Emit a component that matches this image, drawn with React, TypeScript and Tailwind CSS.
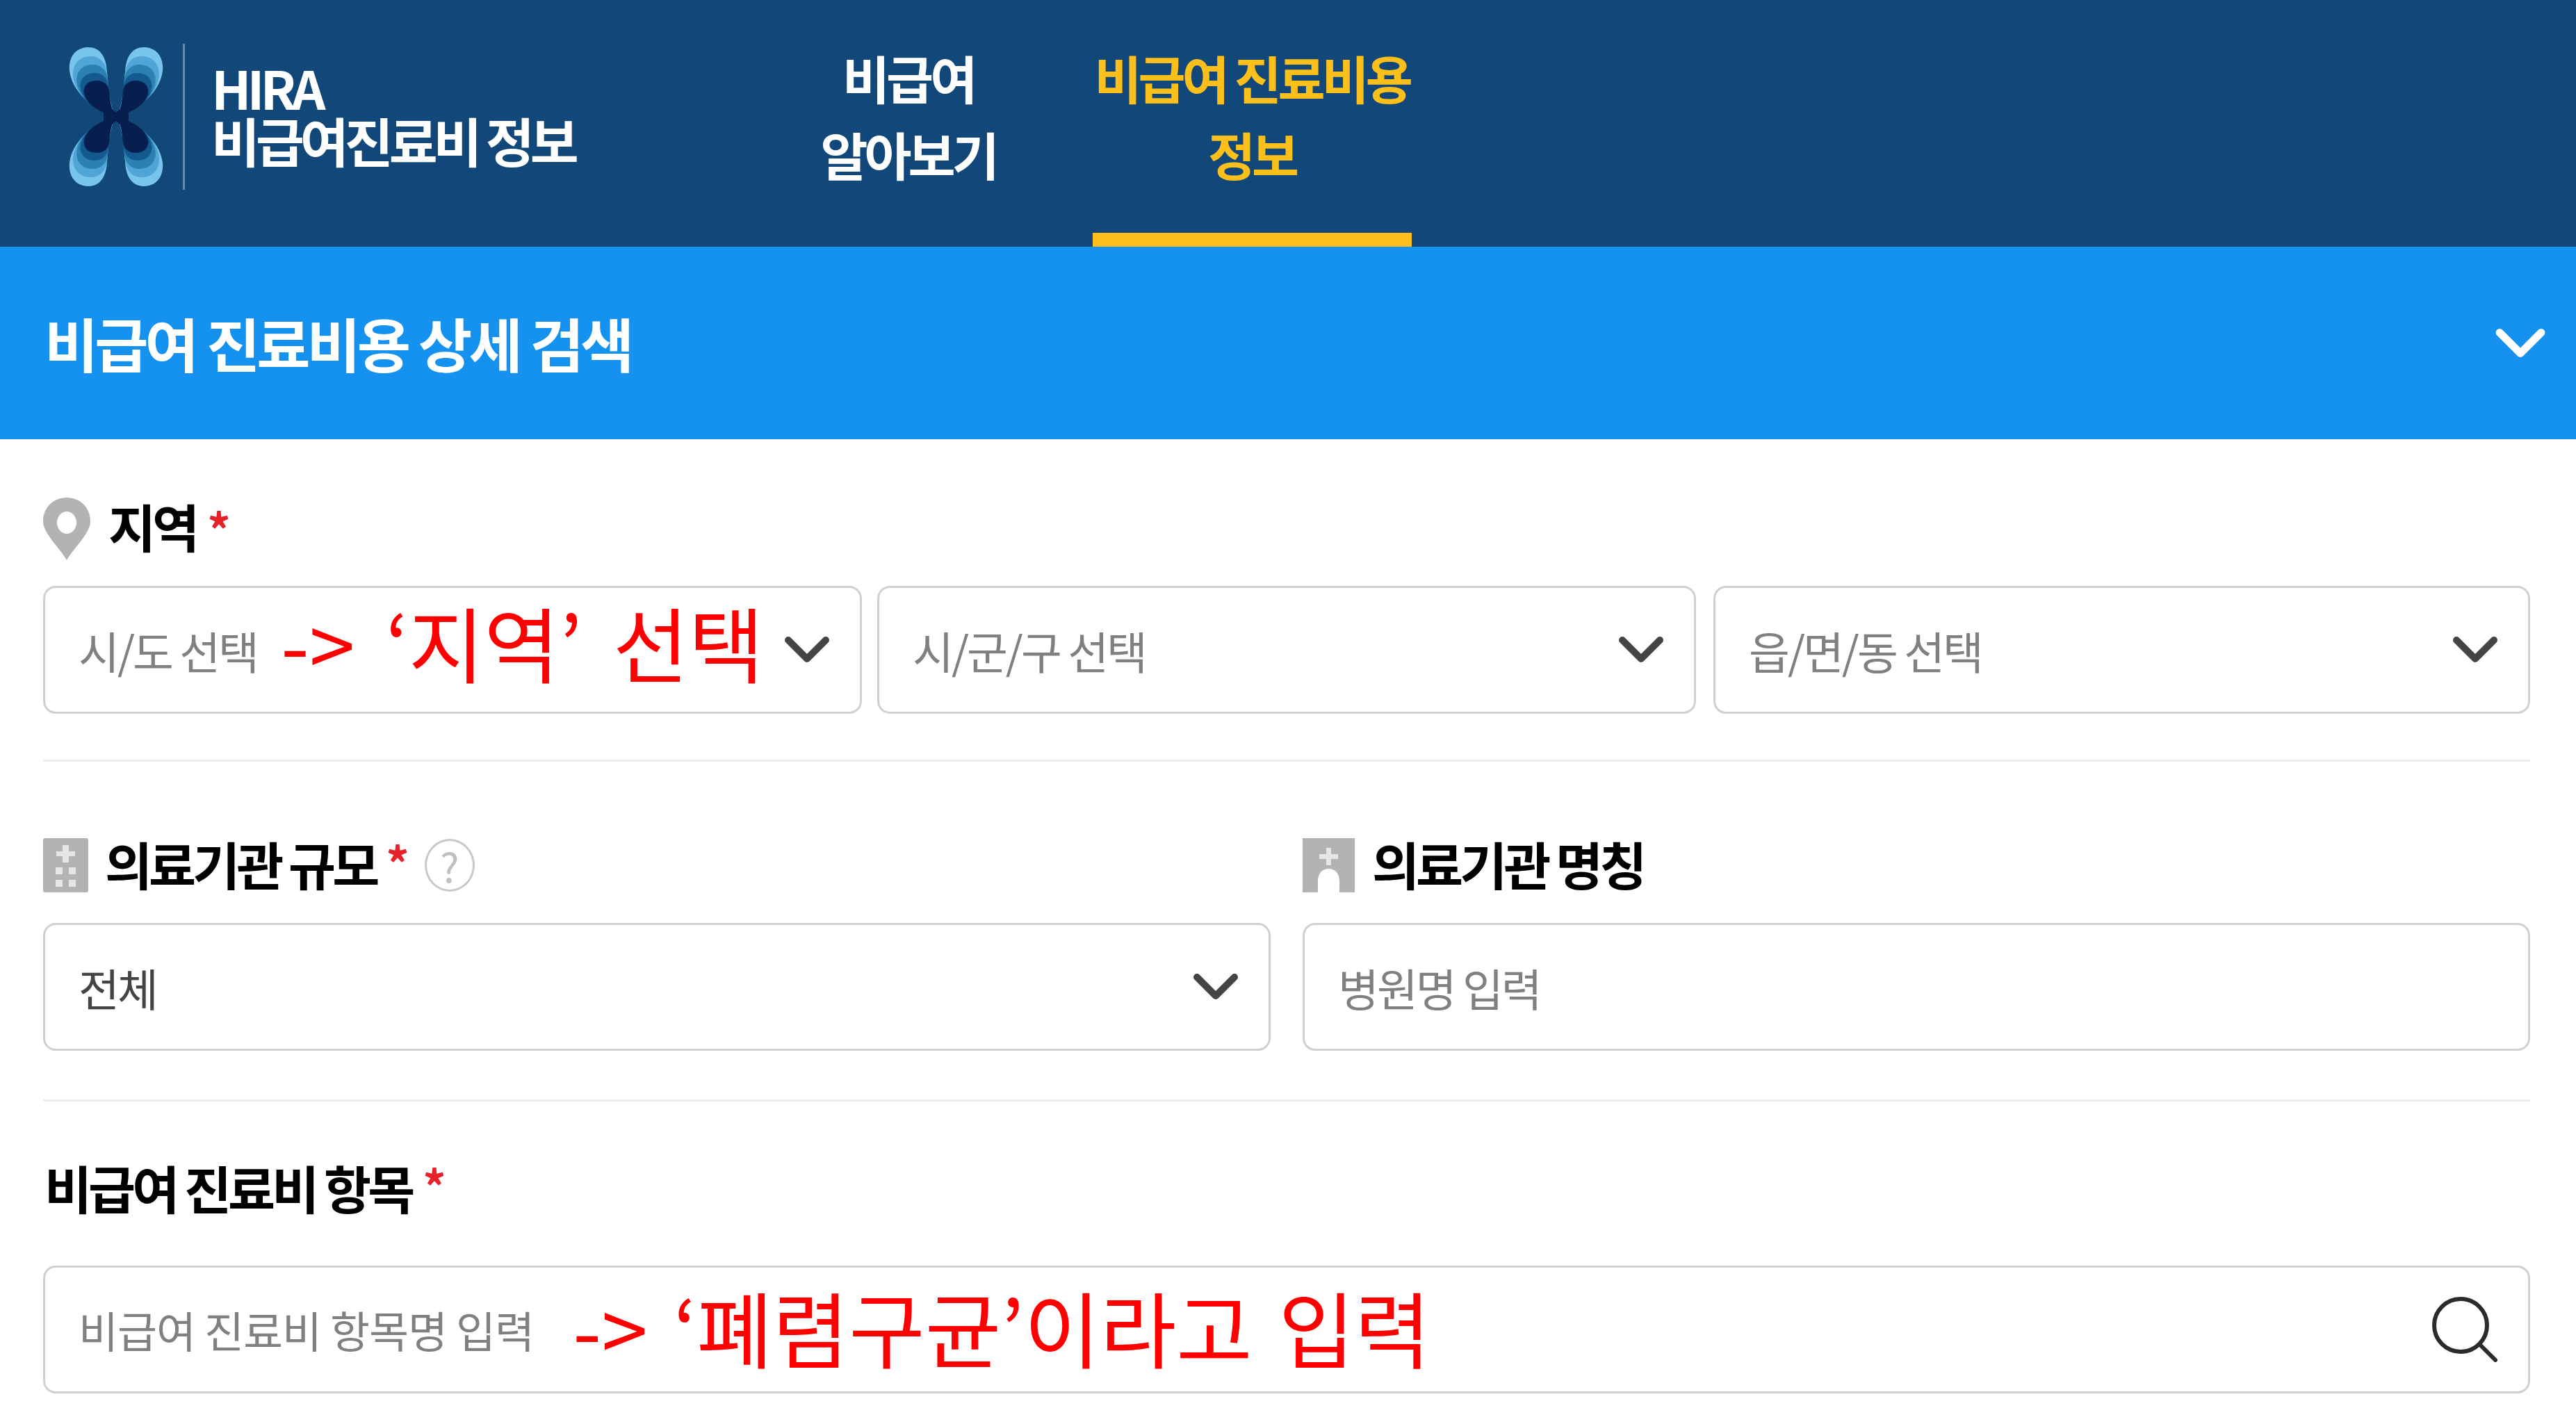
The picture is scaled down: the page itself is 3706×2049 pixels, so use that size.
import { ReactNode } from 'react';

function Chevron({ className = 'w-[64px] h-[38px] text-[#444]' }: { className?: string }) {
  return (
    <svg viewBox="0 0 64 38" fill="none" className={className}>
      <path d="M5 5 L32 32 L59 5" stroke="currentColor" strokeWidth="10" strokeLinecap="round" strokeLinejoin="round" />
    </svg>
  );
}

function Required() {
  return <span className="text-[#e6212a] text-[66px] leading-none font-bold self-start">*</span>;
}

function Logo() {
  const lobe = 'M66 100 C46 92 6 72 1 34 C-1 12 12 0 28 0 C44 0 54 12 55 36 C56 60 60 82 66 100Z';
  const layers = [
    { sx: 1, sy: 1, c: '#78c4ea' },
    { sx: 0.92, sy: 0.87, c: '#4fa6d6' },
    { sx: 0.84, sy: 0.75, c: '#2b80b4' },
    { sx: 0.76, sy: 0.63, c: '#135a8f' },
    { sx: 0.68, sy: 0.52, c: '#061f4e' },
  ];
  const quarter = layers.map(l => (
    <path key={l.c} d={lobe} fill={l.c} transform={`translate(66 100) scale(${l.sx} ${l.sy}) translate(-66 -100)`} />
  ));
  return (
    <svg viewBox="0 0 136 200" className="w-[136px] h-[200px]">
      <g>{quarter}</g>
      <g transform="matrix(-1 0 0 1 136 0)">{quarter}</g>
      <g transform="matrix(1 0 0 -1 0 200)">{quarter}</g>
      <g transform="matrix(-1 0 0 -1 136 200)">{quarter}</g>
      <path d="M50 78 L68 94 L86 78 L86 122 L68 106 L50 122Z" fill="#061f4e" />
    </svg>
  );
}

function Field({ children, className = '' }: { children: ReactNode; className?: string }) {
  return (
    <div className={`h-[184px] flex items-center justify-between pl-[48px] pr-[44px] bg-white border-[3px] border-[#d0d0d4] rounded-[18px] ${className}`}>
      {children}
    </div>
  );
}

function Placeholder({ children, dark }: { children: ReactNode; dark?: boolean }) {
  return <span className={`text-[64px] tracking-[-3px] leading-none ${dark ? 'text-[#444]' : 'text-[#808080]'}`}>{children}</span>;
}

function Note({ children, className = '' }: { children: ReactNode; className?: string }) {
  return <span className={`text-[#ff0000] leading-none whitespace-pre ${className}`}>{children}</span>;
}

export default function App() {
  return (
    <div className="w-[3706px] h-[2049px] bg-white overflow-hidden font-['Noto_Sans_CJK_KR',sans-serif]">
      <header className="h-[355px] bg-[#12477a] flex pl-[99px]">
        <div className="flex items-center h-[336px]">
          <Logo />
          <div className="w-[3px] h-[210px] bg-[#6d8caa] ml-[28px]" />
          <div className="ml-[38px] text-white font-bold leading-[76px] tracking-[-6px] text-[76px] -mt-[10px]">
            <div>HIRA</div>
            <div>비급여진료비 정보</div>
          </div>
        </div>
        <nav className="flex ml-[350px] gap-[135px] text-[74px] leading-[110px] font-bold tracking-[-5px] text-center whitespace-nowrap">
          <div className="w-[260px] pt-[56px] text-white">
            비급여
            <br />
            알아보기
          </div>
          <div className="w-[459px] pt-[56px] h-[355px] text-[#fdc01b] border-b-[20px] border-[#fdc01b]">
            비급여 진료비용
            <br />
            정보
          </div>
        </nav>
      </header>

      <div className="h-[277px] bg-[#1592f0] flex items-center justify-between pl-[64px] pr-[42px]">
        <h1 className="text-white text-[84px] font-bold tracking-[-5px] [word-spacing:2px] leading-none -mt-[2px]">비급여 진료비용 상세 검색</h1>
        <Chevron className="w-[76px] h-[42px] text-white" />
      </div>

      <main className="pl-[62px] pr-[66px]">
        <section className="pt-[84px] pb-[66px] border-b-[3px] border-[#eeeeee]">
          <div className="flex items-center gap-[26px] h-[90px]">
            <svg viewBox="0 0 68 90" className="w-[68px] h-[90px]">
              <path fillRule="evenodd" d="M34 0 C14 0 0 15 0 34 C0 52 24 72 34 90 C44 72 68 52 68 34 C68 15 54 0 34 0Z M34 20 A14 16 0 1 0 34 52 A14 16 0 1 0 34 20Z" fill="#b3b3b3" />
            </svg>
            <span className="text-[74px] font-bold tracking-[-5px] leading-none text-black -mt-[10px]">지역</span>
            <span className="-ml-[10px] -mt-[4px]"><Required /></span>
          </div>
          <div className="flex mt-[37px]">
            <Field className="w-[1178px]">
              <Placeholder>시/도 선택</Placeholder>
              <Note className="text-[118px] [word-spacing:18px] ml-[34px] mr-auto -mt-[24px]">{"-> ‘지역’ 선택"}</Note>
              <Chevron />
            </Field>
            <Field className="w-[1178px] ml-[22px]">
              <Placeholder>시/군/구 선택</Placeholder>
              <Chevron />
            </Field>
            <Field className="w-[1175px] ml-auto">
              <Placeholder>읍/면/동 선택</Placeholder>
              <Chevron />
            </Field>
          </div>
        </section>

        <section className="pt-[110px] pb-[70px] border-b-[3px] border-[#eeeeee] grid grid-cols-2 gap-x-[46px]">
          <div>
            <div className="flex items-center h-[78px]">
              <svg viewBox="0 0 65 78" className="w-[65px] h-[78px] mr-[24px]">
                <rect width="65" height="78" rx="3" fill="#b3b3b3" />
                <path d="M28 10h9v9h9v7h-9v9h-9v-9h-9v-7h9z" fill="#e6e6e6" />
                <path d="M18 42h10v10H18zM37 42h10v10H37zM18 60h10v10H18zM37 60h10v10H37z" fill="#e6e6e6" />
              </svg>
              <span className="text-[74px] font-bold tracking-[-5px] leading-none text-black -mt-[6px]">의료기관 규모</span>
              <span className="ml-[14px] self-start"><Required /></span>
              <span className="ml-[22px] w-[72px] h-[76px] rounded-[50%] border-[3px] border-[#c8c8c8] flex items-center justify-center text-[#c0c0c0] text-[58px] leading-none">?</span>
            </div>
            <Field className="mt-[44px]">
              <Placeholder dark>전체</Placeholder>
              <Chevron />
            </Field>
          </div>
          <div>
            <div className="flex items-center h-[78px]">
              <svg viewBox="0 0 75 78" className="w-[75px] h-[78px] mr-[25px]">
                <path d="M0 0H75V78H53V62C53 50 46 44 37.5 44C29 44 22 50 22 62V78H0Z" fill="#b3b3b3" />
                <path d="M34 14h7v9h10v7H41v9h-7v-9H24v-7h10z" fill="#e6e6e6" />
              </svg>
              <span className="text-[74px] font-bold tracking-[-5px] leading-none text-black -mt-[6px]">의료기관 명칭</span>
            </div>
            <Field className="mt-[44px]">
              <Placeholder>병원명 입력</Placeholder>
            </Field>
          </div>
        </section>

        <section className="pt-[86px]">
          <div className="flex items-center gap-[16px] h-[78px]">
            <span className="text-[74px] font-bold tracking-[-5px] leading-none text-black pl-[2px] -mt-[4px]">비급여 진료비 항목</span>
            <Required />
          </div>
          <Field className="mt-[72px]">
            <span className="text-[62px] tracking-[-1px] leading-none text-[#808080]">비급여 진료비 항목명 입력</span>
            <Note className="text-[119px] [word-spacing:11px] ml-[56px] mr-auto -mt-[10px]">{"-> ‘폐렴구균’이라고 입력"}</Note>
            <svg viewBox="0 0 94 94" fill="none" className="w-[94px] h-[94px] text-[#2b2b2b]">
              <circle cx="41" cy="41" r="38" stroke="currentColor" strokeWidth="6" />
              <path d="M68 68 L91 91" stroke="currentColor" strokeWidth="6" strokeLinecap="round" />
            </svg>
          </Field>
        </section>
      </main>
    </div>
  );
}
